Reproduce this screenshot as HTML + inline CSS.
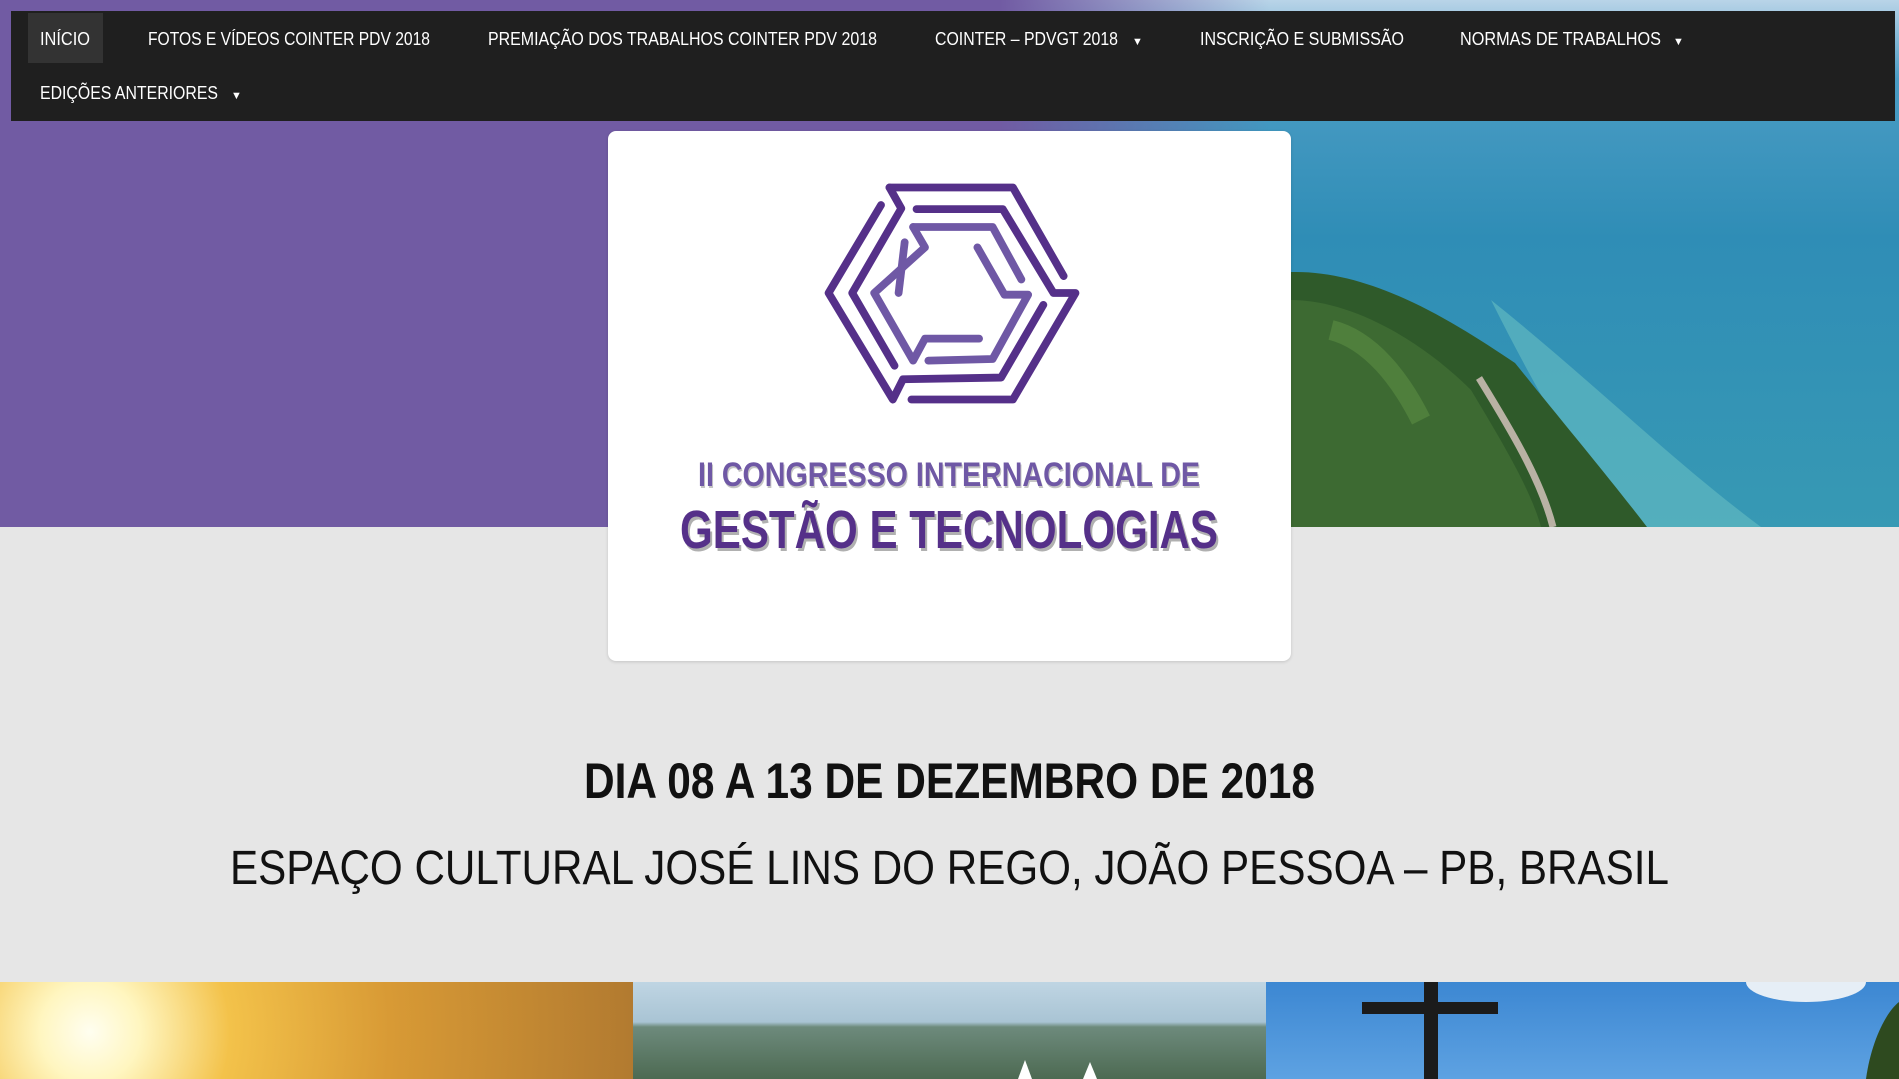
<!DOCTYPE html>
<html><head><meta charset="utf-8"><style>
html,body{margin:0;padding:0;width:1899px;height:1079px;overflow:hidden;background:#e6e6e6;font-family:"Liberation Sans",sans-serif}
.abs{position:absolute}
</style></head><body>
<div class="abs" style="left:0;top:0;width:1899px;height:527px;background:#715ba3"></div>
<div class="abs" style="left:1000px;top:0;width:899px;height:527px;background:linear-gradient(90deg,#715ba3 0%,rgba(113,91,163,0) 30%),linear-gradient(180deg,#b9d4e8 0%,#4a9cc4 15%,#2f8db6 45%,#3799b4 100%)"></div>
<svg class="abs" style="left:1291px;top:0" width="608" height="527">
<path d="M200 300 C300 380 380 460 470 527 L330 527 C280 450 240 380 200 300Z" fill="#5fb8c0" opacity=".7"/>
<path d="M0 272 C80 270 160 320 224 363 C270 420 320 480 356 527 L0 527Z" fill="#2f5a2a"/>
<path d="M0 300 C60 300 130 340 180 390 C210 440 240 490 250 527 L0 527Z" fill="#3d6a32"/>
<path d="M40 330 C80 340 110 380 130 420" stroke="#4f7f3c" stroke-width="20" fill="none"/>
<path d="M188 378 C220 430 250 480 262 527" stroke="#b9b2a4" stroke-width="7" fill="none"/>
</svg>
<div class="abs" style="left:11px;top:11px;width:1884px;height:110px;background:#1f1f1f"></div>
<div class="abs" style="left:28px;top:13px;width:75px;height:50px;background:#333"></div>
<svg class="abs" style="left:0;top:0" width="1899" height="130" font-family="Liberation Sans Narrow,Liberation Sans,sans-serif" font-size="18" fill="#fff">
<text x="40" y="45" textLength="50" lengthAdjust="spacingAndGlyphs">INÍCIO</text>
<text x="148" y="45" textLength="282" lengthAdjust="spacingAndGlyphs">FOTOS E VÍDEOS COINTER PDV 2018</text>
<text x="488" y="45" textLength="389" lengthAdjust="spacingAndGlyphs">PREMIAÇÃO DOS TRABALHOS COINTER PDV 2018</text>
<text x="935" y="45" textLength="183" lengthAdjust="spacingAndGlyphs">COINTER – PDVGT 2018</text>
<text x="1132" y="45" font-size="11">▼</text>
<text x="1200" y="45" textLength="204" lengthAdjust="spacingAndGlyphs">INSCRIÇÃO E SUBMISSÃO</text>
<text x="1460" y="45" textLength="201" lengthAdjust="spacingAndGlyphs">NORMAS DE TRABALHOS</text>
<text x="1673" y="45" font-size="11">▼</text>
<text x="40" y="99" textLength="178" lengthAdjust="spacingAndGlyphs">EDIÇÕES ANTERIORES</text>
<text x="231" y="99" font-size="11">▼</text>
</svg>
<div class="abs" style="left:608px;top:131px;width:683px;height:530px;background:#fff;border-radius:8px;box-shadow:0 1px 3px rgba(0,0,0,.15)"></div>
<svg class="abs" style="left:820px;top:178px" width="260" height="230" viewBox="0 0 768 680">
<g fill="none" stroke-linecap="round" stroke-linejoin="round" stroke-width="23">
<g stroke="#553089">
<polyline points="205,28 570,28 720,290"/>
<polyline points="205,28 240,90 95,340 220,555"/>
<polyline points="180,80 25,340 215,655 245,595 535,590 660,375"/>
<polyline points="285,92 540,92 690,340 755,340 570,655 270,655"/>
</g>
<g stroke="#6f58a5">
<polyline points="275,145 510,145 595,300"/>
<polyline points="275,145 310,205 160,340 275,540 310,475 470,475"/>
<polyline points="250,190 232,340"/>
<polyline points="465,205 545,345 615,345 510,535 320,540"/>
</g>
</g>
</svg>
<svg class="abs" style="left:600px;top:440px" width="700" height="130" font-family="Liberation Sans Narrow,Liberation Sans,sans-serif" font-weight="bold">
<text x="99" y="48" font-size="34" fill="#c4c4c4" textLength="502" lengthAdjust="spacingAndGlyphs">II CONGRESSO INTERNACIONAL DE</text>
<text x="98" y="46" font-size="34" fill="#6f58a5" textLength="502" lengthAdjust="spacingAndGlyphs">II CONGRESSO INTERNACIONAL DE</text>
<text x="82" y="111" font-size="54" fill="#b0b0b0" textLength="538" lengthAdjust="spacingAndGlyphs">GESTÃO E TECNOLOGIAS</text>
<text x="80" y="108" font-size="54" fill="#553089" textLength="538" lengthAdjust="spacingAndGlyphs">GESTÃO E TECNOLOGIAS</text>
</svg>
<svg class="abs" style="left:0;top:740px" width="1899" height="160" font-family="Liberation Sans Narrow,Liberation Sans,sans-serif" fill="#111">
<text x="584" y="58" font-size="50" font-weight="bold" textLength="731" lengthAdjust="spacingAndGlyphs">DIA 08 A 13 DE DEZEMBRO DE 2018</text>
<text x="230" y="144" font-size="48" textLength="1439" lengthAdjust="spacingAndGlyphs">ESPAÇO CULTURAL JOSÉ LINS DO REGO, JOÃO PESSOA – PB, BRASIL</text>
</svg>
<div class="abs" style="left:0;top:982px;width:633px;height:97px;background:radial-gradient(circle at 90px 50px,#fffef0 0,#fff6c0 50px,#f3c24a 140px,#d89a35 300px,#a9732f 600px)"></div>
<div class="abs" style="left:633px;top:982px;width:633px;height:97px;background:linear-gradient(180deg,#bfd5e3 0,#a9c4d4 40px,#6d8a7c 45px,#4d6a52 100%)"></div>
<svg class="abs" style="left:633px;top:982px" width="633" height="97"><polygon points="385,97 392,78 399,97" fill="#fff"/><polygon points="450,97 457,80 464,97" fill="#fff"/></svg>
<div class="abs" style="left:1266px;top:982px;width:633px;height:97px;background:linear-gradient(180deg,#3c87d2,#5ea2e2)"></div>
<svg class="abs" style="left:1266px;top:982px" width="633" height="97">
<ellipse cx="540" cy="0" rx="60" ry="20" fill="#e6eef6"/>
<rect x="158" y="0" width="14" height="97" fill="#1b1b1b"/>
<rect x="96" y="20" width="136" height="12" fill="#1b1b1b"/>
<path d="M600 97 C605 60 620 30 633 20 L633 97Z" fill="#2e4a1f"/>
</svg>
</body></html>
